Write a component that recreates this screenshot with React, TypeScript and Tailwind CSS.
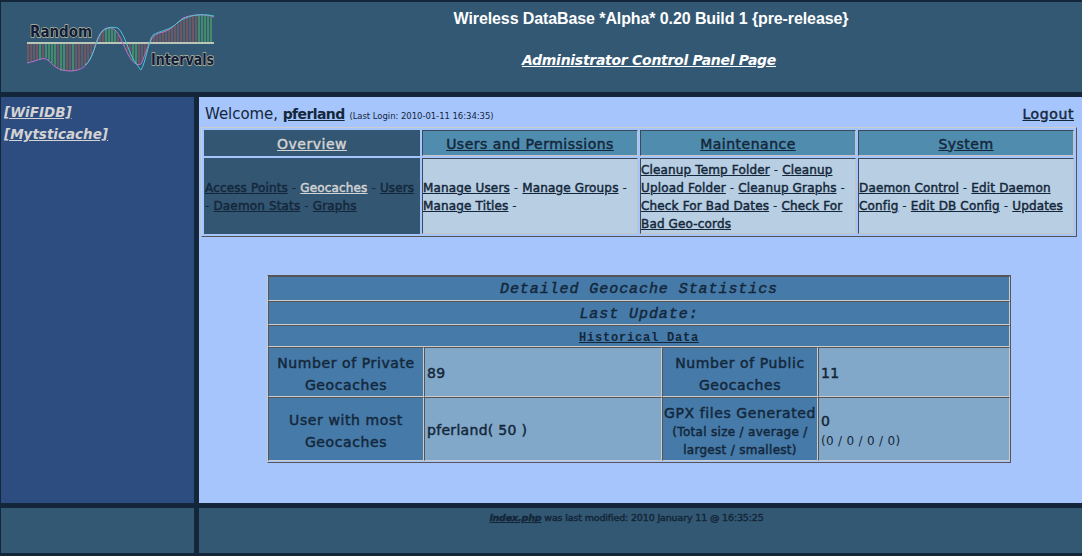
import React from 'react';

// bar tops for the logo chart, sampled along the price curve
const curve: [number, number][] = [
  [26, 60], [36, 58], [45, 56], [52, 62], [60, 69], [75, 69], [85, 62], [92, 48], [100, 30],
  [107, 25], [115, 29], [122, 42], [130, 56], [137, 64], [142, 58], [150, 35], [160, 31],
  [172, 25], [185, 15], [198, 12], [213, 15],
];

const curveY = (x: number) => {
  for (let i = 1; i < curve.length; i++) {
    if (x <= curve[i][0]) {
      const [x0, y0] = curve[i - 1];
      const [x1, y1] = curve[i];
      return y0 + ((y1 - y0) * (x - x0)) / (x1 - x0);
    }
  }
  return curve[curve.length - 1][1];
};

const greenBars = [39, 45, 48, 51, 54, 60, 63, 72, 105, 108, 111, 114, 132, 135, 198, 201, 204, 207, 210];

const Logo = () => {
  const bars: number[] = [];
  for (let x = 27; x < 213; x += 3) bars.push(x);
  return (
    <svg width="240" height="90" viewBox="0 0 240 90" className="block shrink-0">
      <g className="blur-[0.6px]">
        {bars.map((x) => (
          <line
            key={x}
            x1={x}
            x2={x}
            y1={41}
            y2={curveY(x)}
            stroke={greenBars.includes(x) ? '#4fa868' : '#8c5a5c'}
            strokeWidth="1.3"
          />
        ))}
        <line x1="26" x2="213" y1="41" y2="41" stroke="#b9c6b8" strokeWidth="2" />
        <path
          d="M26 61C40 58 42 54 48 59C54 66 60 69 70 69C85 68 90 60 96 38C100 28 104 25 110 26C118 27 122 44 128 54C132 61 136 64 140 62C146 50 148 34 158 31C170 29 172 24 182 16C192 12 205 12 213 15"
          fill="none"
          stroke="#c070d0"
          strokeWidth="1"
        />
        <path
          d="M84 63C92 58 94 40 100 31C106 24 112 25 117 26C124 32 128 52 134 60C138 65 139 68 140 68C145 60 147 40 152 33C158 29 170 28 176 21C186 13 200 11 213 14"
          fill="none"
          stroke="#4cc6cc"
          strokeWidth="1"
        />
      </g>
      <text
        x="29"
        y="35"
        fontFamily="'DejaVu Sans', sans-serif"
        fontSize="16"
        fontWeight="bold"
        fill="#101c3a"
        stroke="#b8b89a"
        strokeWidth="1.4"
        paintOrder="stroke"
        textLength="62"
        lengthAdjust="spacingAndGlyphs"
      >
        Random
      </text>
      <text
        x="150"
        y="63"
        fontFamily="'DejaVu Sans', sans-serif"
        fontSize="16"
        fontWeight="bold"
        fill="#101c3a"
        stroke="#b8b89a"
        strokeWidth="1.4"
        paintOrder="stroke"
        textLength="63"
        lengthAdjust="spacingAndGlyphs"
      >
        Intervals
      </text>
    </svg>
  );
};

const heavy = '[-webkit-text-stroke:0.45px_currentColor]';
const linkDark = `underline ${heavy} text-[#14273a]`;

const Links = ({ items, active, dangling }: { items: string[]; active?: string; dangling?: boolean }) => (
  <>
    {items.map((item, i) => (
      <React.Fragment key={item}>
        <a href="#" className={item === active ? `underline ${heavy} text-[#d3d3d3]` : linkDark}>
          {item}
        </a>
        {i < items.length - 1 || dangling ? ' - ' : ''}
      </React.Fragment>
    ))}
  </>
);

const tabBase = `flex items-center justify-center border pt-[2px] text-[14px] tracking-[0.5px] ${heavy} underline`;
const tabOff = `${tabBase} bg-[#4f8cae] border-t-[#3a4a5a] border-l-[#3a4a5a] border-r-[#c4c4c4] border-b-[#c4c4c4] text-[#14273a]`;
const tabOn = `${tabBase} bg-[#335673] border-[#335673] text-[#d3d3d3]`;
const paneBase = 'flex items-center pt-[2px] text-[12px] leading-[18px] tracking-[0.15px] text-[#14273a]';
const paneOff = `${paneBase} border border-t-[#3a4a5a] border-l-[#3a4a5a] border-r-[#c4c4c4] border-b-[#c4c4c4] bg-[#b8cee2]`;

const cell = 'border border-t-[#555] border-l-[#555] border-r-[#ccc] border-b-[#ccc]';
const titleRow = `${cell} col-span-4 flex items-center justify-center pt-[2px] bg-[#457aa9] font-['Liberation_Mono',monospace] text-[#14273a]`;
const labelCell = `${cell} flex flex-col items-center justify-center pt-[3px] bg-[#457aa9] text-center tracking-[0.6px] ${heavy} text-[#14273a]`;
const valueCell = `${cell} flex flex-col justify-center bg-[#82a8c9] pt-[3px] pl-[2px] text-[#14273a]`;

export default function App() {
  return (
    <div className="flex h-[556px] w-[1082px] flex-col gap-[5px] overflow-hidden bg-[#14273a] pt-[2px] pl-[1px] font-['DejaVu_Sans',sans-serif] text-[#14273a]">
      <div className="flex h-[90px] shrink-0 bg-[#335873]">
        <Logo />
        <div className="flex flex-1 flex-col items-center pr-[21px] text-white">
          <div className="mt-[8px] font-['Liberation_Sans',sans-serif] text-[16px] leading-[18px] font-bold tracking-[-0.1px]">
            Wireless DataBase *Alpha* 0.20 Build 1 {'{pre-release}'}
          </div>
          <a href="#" className="mt-[23px] mr-[4px] text-[14px] leading-[18px] font-bold italic underline tracking-[-0.28px]">
            Administrator Control Panel Page
          </a>
        </div>
      </div>

      <div className="flex h-[406px] shrink-0 gap-[5px]">
        <div className="flex w-[193px] flex-col bg-[#2d4d80] pt-[4px] pl-[3px] text-[13.5px] leading-[22px] font-bold text-[#d3d3d3] italic">
          <a href="#" className="underline">[WiFIDB]</a>
          <a href="#" className="underline">[Mytsticache]</a>
        </div>

        <div className="flex flex-1 flex-col bg-[#a6c5fd] pl-[2px]">
          <div className="flex h-[30px] w-[876px] items-center justify-between pt-[4px] pr-[3px] pl-[4px]">
            <div className="text-[15px] tracking-[-0.05px]">
              Welcome, <a href="#" className="text-[14px] tracking-[-0.6px] font-bold underline">pferland</a>{' '}
              <span className="text-[8.5px]">(Last Login: 2010-01-11 16:34:35)</span>
            </div>
            <a href="#" className={`text-[14px] tracking-[0.6px] ${heavy} underline`}>Logout</a>
          </div>

          <div className="grid w-[876px] grid-cols-[216px_216px_216px_216px] grid-rows-[26px_76px] gap-[2px] border border-t-[#ccc] border-l-[#ccc] border-r-[#555] border-b-[#555] p-[2px]">
            <a href="#" className={tabOn}>Overview</a>
            <a href="#" className={tabOff}>Users and Permissions</a>
            <a href="#" className={tabOff}>Maintenance</a>
            <a href="#" className={tabOff}>System</a>
            <div className={`${paneBase} border border-[#335673] bg-[#335673]`}>
              <div>
                <Links items={['Access Points', 'Geocaches', 'Users']} active="Geocaches" dangling />
                <Links items={['Daemon Stats', 'Graphs']} />
              </div>
            </div>
            <div className={paneOff}>
              <div>
                <Links items={['Manage Users', 'Manage Groups', 'Manage Titles']} dangling />
              </div>
            </div>
            <div className={paneOff}>
              <div>
                <Links items={['Cleanup Temp Folder', 'Cleanup Upload Folder', 'Cleanup Graphs', 'Check For Bad Dates', 'Check For Bad Geo-cords']} />
              </div>
            </div>
            <div className={paneOff}>
              <div>
                <Links items={['Daemon Control', 'Edit Daemon Config', 'Edit DB Config', 'Updates']} />
              </div>
            </div>
          </div>

          <div className="mt-[38px] ml-[66px] grid h-[188px] w-[744px] grid-cols-[156px_238px_156px_192px] grid-rows-[25px_24px_22px_50px_64px] border border-t-[#555] border-l-[#ccc] border-r-[#555] border-b-[#555]">
            <div className={`${titleRow} pt-[4px] text-[15px] tracking-[0.93px] italic ${heavy}`}>Detailed Geocache Statistics</div>
            <div className={`${titleRow} pt-[4px] text-[15px] tracking-[0.93px] italic ${heavy}`}>Last Update:</div>
            <div className={`${titleRow} pt-[3px] text-[12px] tracking-[0.8px] font-bold`}>
              <a href="#" className="underline">Historical Data</a>
            </div>
            <div className={`${labelCell} text-[14px] leading-[22px]`}>
              <span>Number of Private</span>
              <span>Geocaches</span>
            </div>
            <div className={`${valueCell} text-[14px] tracking-[0.3px] ${heavy}`}>89</div>
            <div className={`${labelCell} text-[14px] leading-[22px]`}>
              <span>Number of Public</span>
              <span>Geocaches</span>
            </div>
            <div className={`${valueCell} text-[14px] tracking-[0.3px] ${heavy}`}>11</div>
            <div className={`${labelCell} text-[14px] leading-[22px]`}>
              <span>User with most</span>
              <span>Geocaches</span>
            </div>
            <div className={`${valueCell} text-[14px] tracking-[0.3px] ${heavy}`}>pferland( 50 )</div>
            <div className={`${labelCell} text-[14px] leading-[20px]`}>
              <span>GPX files Generated</span>
              <span className="text-[12px] leading-[18px] tracking-[0.3px]">(Total size / average /</span>
              <span className="text-[12px] leading-[18px] tracking-[0.3px]">largest / smallest)</span>
            </div>
            <div className={`${valueCell} text-[14px]`}>
              <span className={heavy}>0</span>
              <span className="text-[12px] tracking-[0.3px]">(0 / 0 / 0 / 0)</span>
            </div>
          </div>
        </div>
      </div>

      <div className="flex h-[45px] shrink-0 gap-[5px]">
        <div className="w-[193px] bg-[#335873]" />
        <div className={`flex-1 bg-[#335873] pt-[3px] pr-[28px] text-center text-[9.5px] leading-[14px] tracking-[-0.15px] text-[#14273a] ${heavy}`}>
          <a href="#" className="font-bold italic underline">index.php</a> was last modified: 2010 January 11 @ 16:35:25
        </div>
      </div>
    </div>
  );
}
